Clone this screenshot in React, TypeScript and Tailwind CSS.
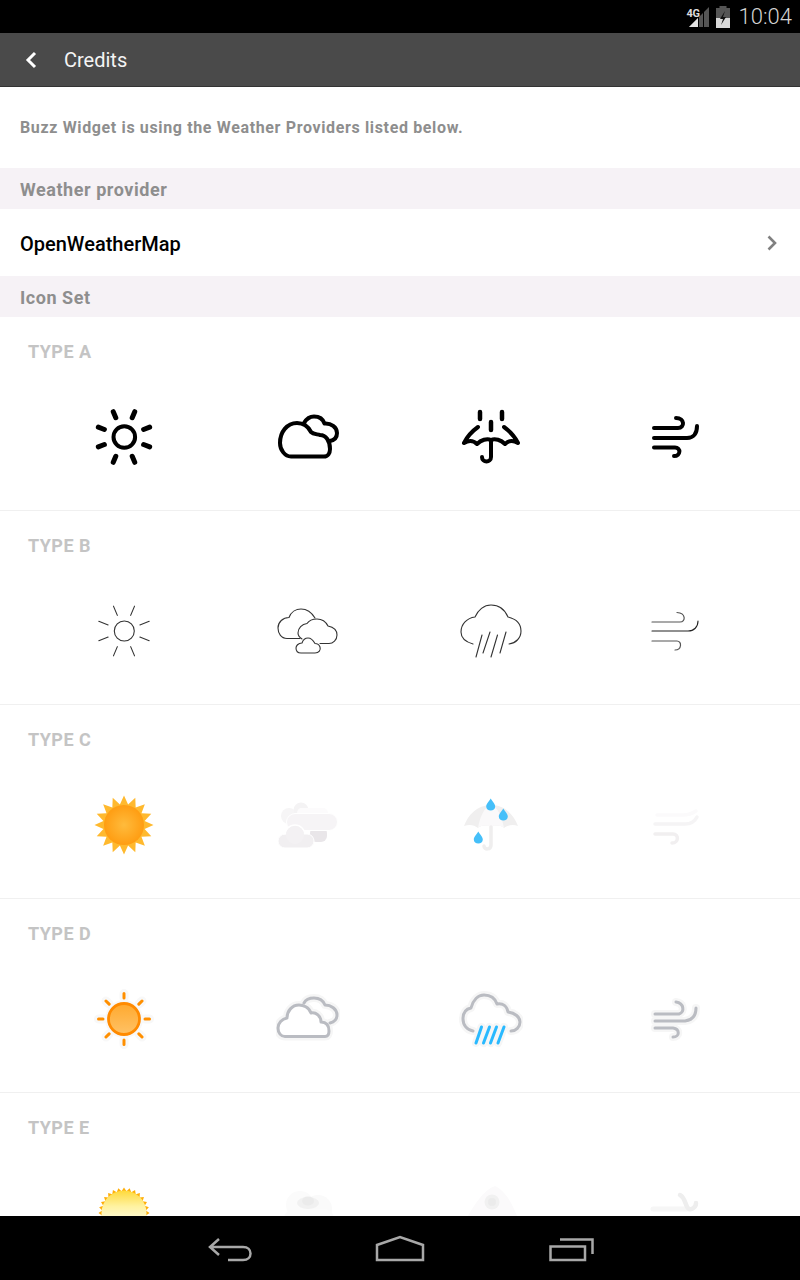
import React from "react";

const Ico = ({ children }: { children: React.ReactNode }) => (
  <div className="flex justify-center">
    <svg width="64" height="64" viewBox="0 0 64 64" fill="none" strokeLinecap="round" strokeLinejoin="round">
      {children}
    </svg>
  </div>
);

const rays = (r1: number, r2: number, angles: number[]) =>
  angles.map((a) => {
    const t = (a * Math.PI) / 180;
    return `M${32 + r1 * Math.sin(t)} ${32 - r1 * Math.cos(t)}L${32 + r2 * Math.sin(t)} ${32 - r2 * Math.cos(t)}`;
  }).join("");

const spikes = (n: number, r1: number, r2: number) => {
  const pts: string[] = [];
  for (let i = 0; i < n * 2; i++) {
    const t = (i * Math.PI) / n;
    const r = i % 2 === 0 ? r2 : r1;
    pts.push(`${32 + r * Math.sin(t)},${32 - r * Math.cos(t)}`);
  }
  return pts.join(" ");
};

const sunAngles = [-23, 23, 69, 111, 157, 203, 249, 291];
const cloudFront = "M9 49.5 H49 C52 49.5 53 47 53 44 C53 38 50 35 45 35 C45 29 40 25 35 26 C33 20 27 18 23 18 C16 18 11 24 11 31 C6 32 2 36 2 41 C2 46 5 49.5 9 49.5Z";
const cloudBack = "M28 16 C30 12 34 11 38 11 C43 11 47 13 49 18 C55 18 61 22 61 28 C61 32 58 35 54 36";

const SunA = () => (
  <Ico>
    <circle cx="32.3" cy="32" r="10.8" stroke="#000" strokeWidth="4" />
    <path d={rays(21, 27.5, sunAngles)} stroke="#000" strokeWidth="5" />
  </Ico>
);
const CloudA = () => (
  <Ico>
    <path d="M15 51.5 H48 C52 51.5 54 48 54 44 C54 36 50 30 44 30 C40 29 37 29 35 27 C32 21 27 18 21 18 C11 18 4 27 4 38 C4 45 9 51.5 15 51.5Z" stroke="#000" strokeWidth="4" />
    <path d="M28 18 C31 13 35 11.5 38 11.5 C43 11.5 47 14 48.5 18.5 C55 18 61 22 61 28 C61 32 59 35 54 36" stroke="#000" strokeWidth="4" />
  </Ico>
);
const UmbrellaA = () => (
  <Ico>
    <path d="M21 7 V14 M43 7 V14 M32 17 V25" stroke="#000" strokeWidth="4.5" />
    <path d="M19 22 C12 27 8 32 5 38 C10 35 14 35 18 39 C22 35 28 33 32 35 C36 33 42 35 46 39 C50 35 54 35 59 38 C56 32 52 27 45 22" stroke="#000" strokeWidth="4" />
    <path d="M32 36 V52 C32 58 23 58 23 52" stroke="#000" strokeWidth="4" />
  </Ico>
);
const WindA = () => (
  <Ico>
    <path d="M11 23 H35 C42 23 42 13 33 13" stroke="#000" strokeWidth="4" />
    <path d="M11 33 H44 C51 33 54 28 54 21" stroke="#000" strokeWidth="4" />
    <path d="M11 42.5 H32 C38 42.5 38 51 31 51" stroke="#000" strokeWidth="4" />
  </Ico>
);

const SunB = () => (
  <Ico>
    <circle cx="32.3" cy="32" r="10" stroke="#333" strokeWidth="1.1" />
    <path d={rays(17, 27, sunAngles)} stroke="#333" strokeWidth="1.1" />
  </Ico>
);
const CloudsB = () => (
  <Ico>
    <g stroke="#333" strokeWidth="1.1">
      <path d="M24 39.5 H11 C5 39.5 2 34 2 29 C2 23 7 18.5 13 18.5 C15 13 20 10 25 10 C31 10 36 14 39 19" />
      <path d="M26 40 C23 38 22 36 22 34 C22 29 26 25 31 24.5 C33 21.5 37 20 41 20 C46 20 50 23 52 27 C57 28 61 31 61 36 C61 41 57 44.5 53 44.5 H44" />
      <path d="M25 54 H39 C43 54 45 51 44 48 C43 45 41 44.5 39 44.5 C37 41 35 39 32 39 C29 39 27 41 26 44 C22 44 20 47 20 49 C20 52 22 54 25 54Z" fill="#fff" />
    </g>
  </Ico>
);
const RainB = () => (
  <Ico>
    <path d="M14 45 C7 43 2 39 2 33 C2 25 8 19 16 18 C19 11 25 6 32 6 C40 6 46 11 49 18 C57 20 62 25 62 32 C62 39 57 44 50 45" stroke="#333" strokeWidth="1.1" />
    <path d="M23 36 L17 58 M31 33 L24 54 M38.5 36 L32 58 M47 33 L41 54" stroke="#333" strokeWidth="1.1" />
  </Ico>
);
const WindB = () => (
  <Ico>
    <path d="M9 23 H37 C43 23 43 14 34 13.5" stroke="#555" strokeWidth="1.2" />
    <path d="M9 32 H45 C51 32 55 28 55 22" stroke="#222" strokeWidth="1.1" />
    <path d="M9 42 H34 C39 42 39 51 32 51" stroke="#555" strokeWidth="1.2" />
  </Ico>
);

const SunC = () => (
  <Ico>
    <defs>
      <radialGradient id="sc">
        <stop offset="0%" stopColor="#ffbb3c" />
        <stop offset="100%" stopColor="#ff9d12" />
      </radialGradient>
    </defs>
    <polygon points={spikes(16, 21, 29.5)} fill="#ffb92e" />
    <circle cx="32" cy="32" r="20" fill="url(#sc)" />
  </Ico>
);
const CloudC = () => (
  <Ico>
    <circle cx="13" cy="23" r="8" fill="#f6f5f6" />
    <circle cx="25" cy="17" r="7.5" fill="#f4f3f4" />
    <circle cx="26" cy="19" r="4" fill="#fff" />
    <rect x="21" y="15" width="31" height="10" rx="5" fill="#fcfbfc" />
    <rect x="34" y="34" width="17" height="15" rx="6" fill="#e9e6e9" />
    <rect x="10.5" y="20.5" width="51" height="17" rx="8.5" fill="#f6f4f6" stroke="#fff" strokeWidth="1" />
    <circle cx="19" cy="42" r="10" fill="#f3f1f3" stroke="#fff" strokeWidth="1.5" />
    <rect x="2" y="41" width="36" height="14" rx="7" fill="#f1eff1" stroke="#fff" strokeWidth="1" />
    <circle cx="19" cy="42" r="9" fill="#f3f1f3" />
  </Ico>
);
const Drop = ({ x, y }: { x: number; y: number }) => (
  <path d={`M${x} ${y - 6} C${x + 1.5} ${y - 3} ${x + 4.5} ${y - 1} ${x + 4.5} ${y + 2} C${x + 4.5} ${y + 4.5} ${x + 2.5} ${y + 6} ${x} ${y + 6} C${x - 2.5} ${y + 6} ${x - 4.5} ${y + 4.5} ${x - 4.5} ${y + 2} C${x - 4.5} ${y - 1} ${x - 1.5} ${y - 3} ${x} ${y - 6}Z`} fill="#45bff9" />
);
const UmbrellaC = () => (
  <Ico>
    <path d="M32 12 C18 12 9 22 5 33 C11 31 15 32 19 35 C23 32 28 32 32 34 C36 32 41 32 45 35 C49 32 54 31 59 33 C55 22 46 12 32 12Z" fill="#f0efef" />
    <path d="M32 12 C25 14 21 24 19 35 C23 32 28 32 32 34 C36 32 41 32 45 35 C43 24 39 14 32 12Z" fill="#faf9fa" />
    <path d="M32 34 V52 C32 57 25 57 25 53" stroke="#efeeee" strokeWidth="3.5" />
    <Drop x={31.7} y={11.5} />
    <Drop x={44.3} y={21.5} />
    <Drop x={19.3} y={44.5} />
  </Ico>
);
const WindC = () => (
  <Ico>
    <path d="M14 22 H40 C46 22 50 20 53 18" stroke="#fbfafb" strokeWidth="3.5" />
    <path d="M12 31 H42 C48 31 52 28 54 24" stroke="#f5f4f5" strokeWidth="3.5" />
    <path d="M12 41 H30 C36 41 36 50 29 50" stroke="#f1eff0" strokeWidth="3.5" />
  </Ico>
);

const SunD = () => (
  <Ico>
    <defs>
      <linearGradient id="sd" x1="0" y1="0" x2="0" y2="1">
        <stop offset="0%" stopColor="#ffa92e" />
        <stop offset="100%" stopColor="#ffc266" />
      </linearGradient>
    </defs>
    <path d={rays(21, 25.5, [0, 45, 90, 135, 180, 225, 270, 315])} stroke="#f8f8f8" strokeWidth="9" />
    <circle cx="32" cy="32" r="19" fill="#f8f8f8" />
    <path d={rays(21, 25.5, [0, 45, 90, 135, 180, 225, 270, 315])} stroke="#ff8f00" strokeWidth="3" />
    <circle cx="32" cy="32" r="15.5" fill="url(#sd)" stroke="#ff8a00" strokeWidth="2.8" />
  </Ico>
);
const CloudD = () => (
  <Ico>
    <g stroke="#f6f6f6" strokeWidth="8">
      <path d={cloudBack} />
      <path d={cloudFront} />
    </g>
    <path d={cloudBack} stroke="#babcc2" strokeWidth="3" />
    <path d={cloudFront} fill="#fff" stroke="#babcc2" strokeWidth="3" />
  </Ico>
);
const RainD = () => {
  const c = "M14 44 C8 43 4 38 4 32 C4 26 7 22 12 21 C14 13 19 8 25 8 C31 8 36 11 38 17 C44 16 48 19 49 25 C56 26 61 30 61 35 C61 40 57 44 52 44";
  const rain = "M22.5 40 L17 56 M30.5 40 L24.5 56 M37.5 40 L31.5 56 M45 40 L39 56";
  return (
    <Ico>
      <path d={c} stroke="#f6f6f6" strokeWidth="8" />
      <path d={rain} stroke="#f6f6f6" strokeWidth="8" />
      <path d={c} stroke="#babcc2" strokeWidth="3" />
      <path d={rain} stroke="#29b9ff" strokeWidth="3" />
    </Ico>
  );
};
const WindD = () => {
  const a = "M12 27 H36 C42 25 41 16 33 15";
  const b = "M12 34 H42 C50 33 53 28 53 21";
  const d = "M12 41 H30 C37 42 37 50 30 50";
  return (
    <Ico>
      <g stroke="#f6f6f6" strokeWidth="8">
        <path d={a} />
        <path d={b} />
        <path d={d} />
      </g>
      <g stroke="#babcc2" strokeWidth="3">
        <path d={a} />
        <path d={b} />
        <path d={d} />
      </g>
    </Ico>
  );
};

const SunE = () => (
  <Ico>
    <defs>
      <linearGradient id="se" x1="0" y1="0" x2="0" y2="1">
        <stop offset="0%" stopColor="#ffd93a" />
        <stop offset="35%" stopColor="#fff2a0" />
        <stop offset="70%" stopColor="#fffce0" />
      </linearGradient>
    </defs>
    <polygon points={spikes(28, 22, 25.5)} fill="#ffae08" />
    <circle cx="32" cy="32" r="22.5" fill="url(#se)" />
  </Ico>
);
const CloudE = () => (
  <Ico>
    <circle cx="24" cy="24" r="14" fill="#fbfbfb" />
    <circle cx="42" cy="28" r="14" fill="#fafafa" />
    <rect x="8" y="28" width="50" height="22" rx="10" fill="#fbfbfb" />
    <ellipse cx="32" cy="22" rx="11" ry="6" fill="#f1f1f1" />
    <ellipse cx="32" cy="20" rx="6" ry="4.5" fill="#ebebeb" />
  </Ico>
);
const UmbrellaE = () => (
  <Ico>
    <path d="M36 5 C50 12 56 30 60 40 H6 C12 30 22 10 36 5Z" fill="#fbfafb" />
    <circle cx="33" cy="21" r="7.5" fill="#f1f1f1" />
    <circle cx="33" cy="21" r="4" fill="#ebebeb" />
  </Ico>
);
const WindE = () => (
  <Ico>
    <path d="M10 28 H44" stroke="#f6f6f6" strokeWidth="5" />
    <path d="M37 14 C43 17 42 26 46 28 C49 29 53 26 53 22" stroke="#eeeeee" strokeWidth="4.5" />
  </Ico>
);

const types = [
  { label: "TYPE A", icons: [SunA, CloudA, UmbrellaA, WindA] },
  { label: "TYPE B", icons: [SunB, CloudsB, RainB, WindB] },
  { label: "TYPE C", icons: [SunC, CloudC, UmbrellaC, WindC] },
  { label: "TYPE D", icons: [SunD, CloudD, RainD, WindD] },
  { label: "TYPE E", icons: [SunE, CloudE, UmbrellaE, WindE] },
];

const SectionHead = ({ title }: { title: string }) => (
  <div className="h-[41px] shrink-0 bg-[#f6f2f6] px-5 pt-[2px] flex items-center text-[18px] font-bold tracking-[0.55px] text-[#8e8e8e]">
    {title}
  </div>
);

const StatusBar = () => (
  <div className="h-[33px] shrink-0 bg-black flex items-center justify-end pr-2">
    <div className="relative w-[22px] h-[22px] mr-[7px]">
      <svg width="22" height="22" viewBox="0 0 22 22">
        <polygon points="2,21 22,1 22,21" fill="#555" />
        <path d="M11.5 0V22M16.5 0V22" stroke="#000" strokeWidth="1" />
        <polygon points="2,21 11,12 11,21" fill="#e4e4e4" />
      </svg>
      <span className="absolute left-0 top-[1px] text-[11px] leading-[14px] font-bold text-[#ddd] tracking-[-0.3px]">4G</span>
    </div>
    <svg width="14" height="22" viewBox="0 0 14 22" className="mr-[9px]">
      <rect x="3.5" y="0" width="7" height="3" fill="#555" />
      <rect x="0" y="2" width="14" height="20" fill="#555" />
      <rect x="0" y="12" width="14" height="10" fill="#d8d8d8" />
      <path d="M9 5 L4 13 H7 L5 19 L10 11 H7Z" fill="#111" />
    </svg>
    <span className="text-[22px] font-light text-[#d4d4d4] leading-none">10:04</span>
  </div>
);

const AppBar = () => (
  <div className="h-[54px] shrink-0 bg-[#4a4a4a] border-b border-[#333] flex items-center">
    <svg width="12" height="18" viewBox="0 0 12 18" className="ml-[25px]" fill="none">
      <path d="M10 2 L3 9 L10 16" stroke="#fff" strokeWidth="3" />
    </svg>
    <span className="ml-[27px] text-[20px] text-[#f4f4f4]">Credits</span>
  </div>
);

const NavBar = () => (
  <div className="h-[64px] shrink-0 bg-black flex items-center justify-center">
    <svg width="800" height="64" viewBox="0 0 800 64" fill="none" stroke="#a8a8a8" strokeWidth="2.5">
      <path d="M219 23 L210 31 L219 39 M210 31 H243 C248 31 250.5 34 250.5 37.5 C250.5 41 248 44 243 44 H228" />
      <path d="M377 44 V29 L400 21 L423 29 V44 Z" />
      <path d="M550.5 30.5 H585 V44 H550.5 Z M560 23.5 H592.5 V38" />
    </svg>
  </div>
);

export default function App() {
  return (
    <div className="w-[800px] h-[1280px] flex flex-col bg-white overflow-hidden font-['Roboto',sans-serif]">
      <StatusBar />
      <AppBar />
      <div className="flex-1 overflow-hidden">
        <div className="h-[81px] px-5 pt-[1px] flex items-center text-[16px] font-bold text-[#8e8e8e] tracking-[0.64px]">
          Buzz Widget is using the Weather Providers listed below.
        </div>
        <SectionHead title="Weather provider" />
        <div className="h-[67px] px-5 pt-[2px] flex items-center justify-between">
          <span className="text-[20px] font-medium text-black">OpenWeatherMap</span>
          <svg width="12" height="18" viewBox="0 0 12 18" className="mr-[2px] -mt-[2px]" fill="none">
            <path d="M2.5 2.5 L9 9 L2.5 15.5" stroke="#808080" strokeWidth="2.6" />
          </svg>
        </div>
        <SectionHead title="Icon Set" />
        {types.map((t) => (
          <div key={t.label} className="h-[194px] border-b border-[#f0f0f0]">
            <div className="h-[68px] pl-7 flex items-center text-[18px] font-bold tracking-[0.45px] text-[#c4c4c4]">{t.label}</div>
            <div className="mt-5 grid grid-cols-4 pl-8 pr-[33px]">
              {t.icons.map((Icon, i) => (
                <Icon key={i} />
              ))}
            </div>
          </div>
        ))}
      </div>
      <NavBar />
    </div>
  );
}
